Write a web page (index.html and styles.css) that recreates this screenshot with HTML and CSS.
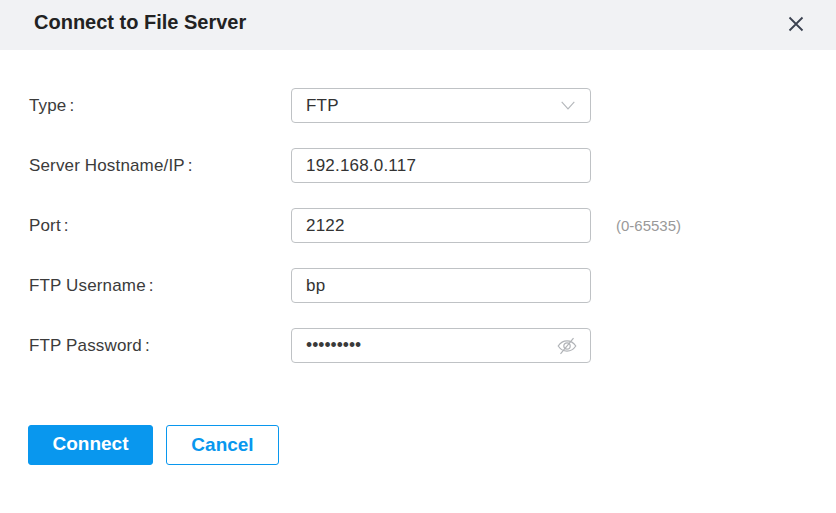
FILE: index.html
```html
<!DOCTYPE html>
<html lang="en">
<head>
<meta charset="utf-8">
<title>Connect to File Server</title>
<link rel="stylesheet" href="styles.css">
</head>
<body>
<div class="dialog">
  <header class="head">
    <h1 class="title">Connect to File Server</h1>
    <button class="close" aria-label="Close">
      <svg width="16" height="16" viewBox="0 0 16 16"><path d="M1.5 1.5 14.5 14.5M14.5 1.5 1.5 14.5" fill="none" stroke="#3a4150" stroke-width="1.8"/></svg>
    </button>
  </header>
  <form class="form">
    <div class="row">
      <span class="label">Type<span class="colon">:</span></span>
      <div class="field"><span class="value">FTP</span>
        <svg class="chev" width="14" height="9" viewBox="0 0 14 9"><path d="M.7.9 7 7.9 13.3.9" fill="none" stroke="#b4b7bb" stroke-width="1.1"/></svg>
      </div>
    </div>
    <div class="row">
      <span class="label">Server Hostname/IP<span class="colon">:</span></span>
      <div class="field"><span class="value">192.168.0.117</span></div>
    </div>
    <div class="row">
      <span class="label">Port<span class="colon">:</span></span>
      <div class="field"><span class="value">2122</span></div>
      <span class="hint">(0-65535)</span>
    </div>
    <div class="row">
      <span class="label">FTP Username<span class="colon">:</span></span>
      <div class="field"><span class="value">bp</span></div>
    </div>
    <div class="row">
      <span class="label">FTP Password<span class="colon">:</span></span>
      <div class="field"><span class="value dots">•••••••••</span>
        <svg class="eye" width="20" height="18" viewBox="0 0 20 18"><g fill="none" stroke="#b0b3b7" stroke-width="1.2"><path d="M1.2 9C3.5 5.6 6.5 3.9 10 3.9S16.5 5.6 18.8 9C16.5 12.4 13.500 14.100 10 14.100S3.500 12.400 1.200 9Z"/><circle cx="10" cy="9" r="3.200"/><path d="M16.500 1.200 3.500 16.800"/></g></svg>
      </div>
    </div>
    <div class="actions">
      <button type="button" class="btn primary">Connect</button>
      <button type="button" class="btn outline">Cancel</button>
    </div>
  </form>
</div>
</body>
</html>
```
FILE: styles.css
```css
* { box-sizing: border-box; }
html, body { margin: 0; padding: 0; background: #fff; }
body { width: 836px; height: 513px; overflow: hidden; font-family: "Liberation Sans", Arial, sans-serif; color: #333; }
.head { height: 50px; background: #f1f2f4; display: flex; align-items: center; justify-content: space-between; padding: 0 32px 6px 34px; }
.title { margin: 0; font-size: 20px; line-height: 24px; font-weight: 700; color: #222; }
.close { border: 0; background: none; padding: 0; display: flex; margin-top: 4px; }
.form { padding: 38px 0 0 29px; display: flex; flex-direction: column; gap: 25px; }
.row { display: flex; align-items: center; height: 35px; font-size: 17px; letter-spacing: .15px; }
.label { width: 262px; color: #3b3b3b; }
.colon { margin-left: 3px; }
.field { width: 300px; height: 35px; border: 1px solid #bfc2c5; border-radius: 4px; display: flex; align-items: center; justify-content: space-between; padding: 0 14px 0 14px; }
.value { font-size: 17px; letter-spacing: .2px; color: #333; }
.dots { font-size: 17.5px; letter-spacing: 0; color: #3a3a3a; }
.hint { margin-left: 25px; font-size: 15px; letter-spacing: 0; color: #999; padding-bottom: 1px; }
.chev { margin-right: 1px; }
.eye { margin-right: -1px; }
.actions { display: flex; gap: 13px; margin: 37px 0 0 -1px; }
.btn { height: 40px; border-radius: 3px; font-family: inherit; font-size: 19px; font-weight: 700; padding: 0 0 2px; }
.primary { width: 125px; background: #0997ee; border: 1px solid #0997ee; color: #fff; }
.outline { width: 113px; background: #fff; border: 1px solid #0997ee; color: #0997ee; padding-bottom: 0; }
```
